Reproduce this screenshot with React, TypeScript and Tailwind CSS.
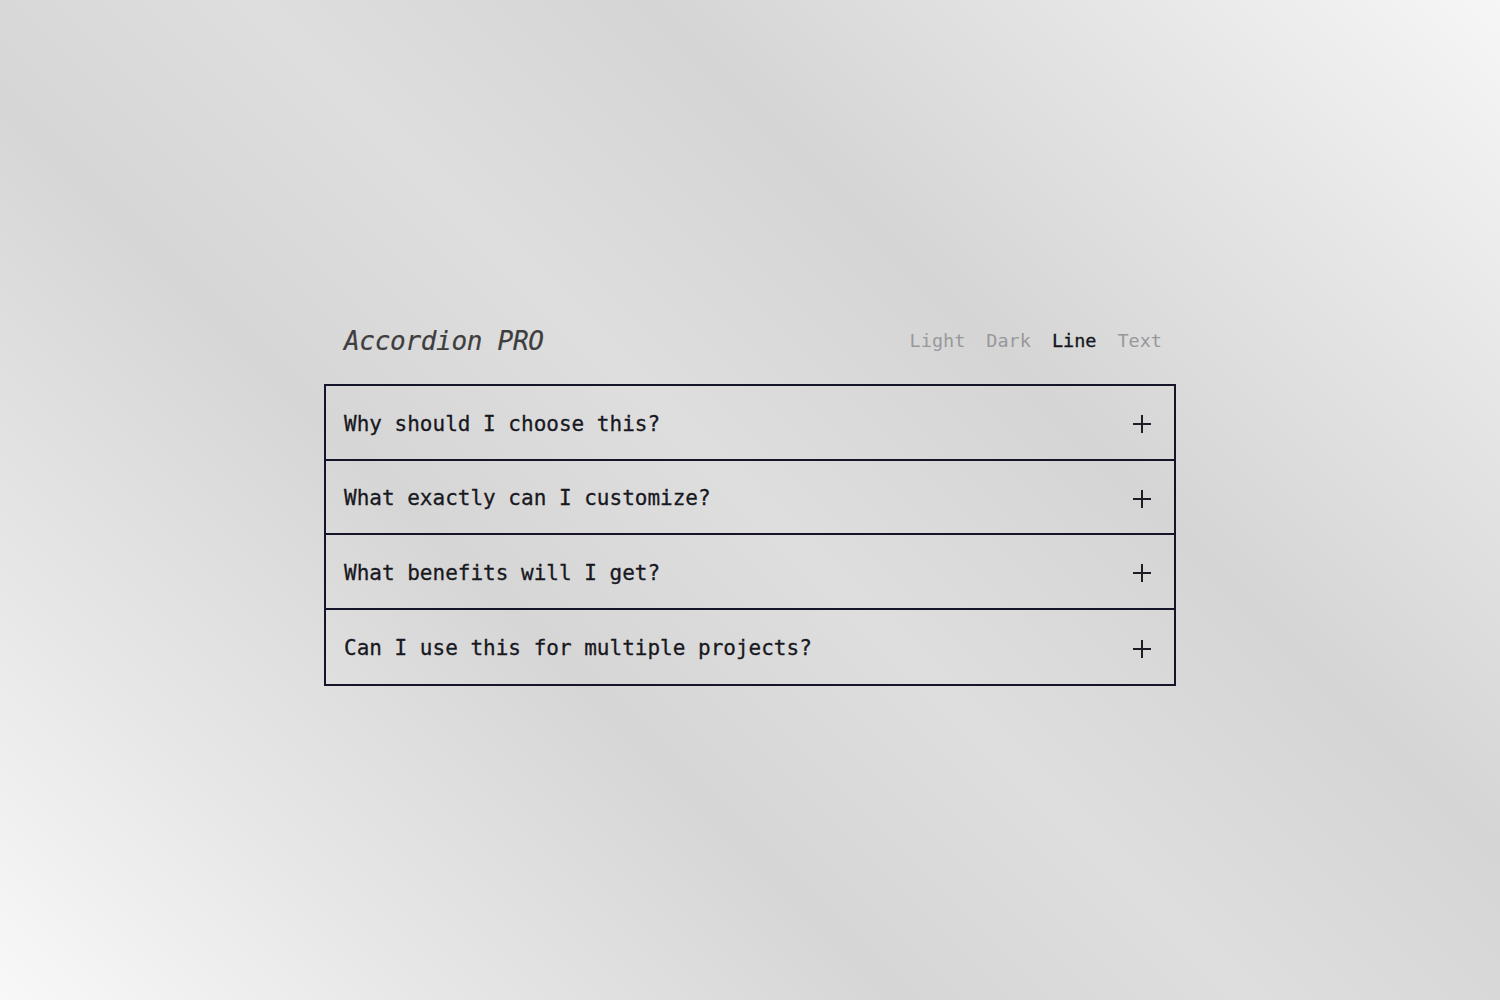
import React from 'react';

const questions = [
  'Why should I choose this?',
  'What exactly can I customize?',
  'What benefits will I get?',
  'Can I use this for multiple projects?',
];

const tabs = ['Light', 'Dark', 'Line', 'Text'];

const PlusIcon = () => (
  <svg width="20" height="20" viewBox="0 0 20 20" fill="none" stroke="#1d1d26" strokeWidth="2" strokeLinecap="butt">
    <path d="M1 10h18M10 1v18" />
  </svg>
);

const App = () => {
  return (
    <div className="min-h-screen w-full flex items-center justify-center bg-[linear-gradient(45deg,#f8f8f8_0%,#e6e6e6_18%,#d6d6d6_36%,#dedede_50%,#d5d5d5_66%,#e4e4e4_82%,#f6f6f6_100%)] font-['DejaVu_Sans_Mono','Liberation_Mono',monospace]">
      <div className="w-[852px] flex flex-col">
        <div className="h-[50px] mb-[20px] pt-[4px] flex items-center justify-between pl-[20px] pr-[14px]">
          <h1 className="text-[26px] italic text-[#3e3e3e] tracking-[-0.3px] [-webkit-text-stroke:0.2px_#3e3e3e]">Accordion PRO</h1>
          <nav className="flex items-center gap-[21px] text-[18.5px]">
            {tabs.map((t) => (
              <span key={t} className={t === 'Line' ? 'text-[#15151c] [-webkit-text-stroke:0.3px_#15151c]' : 'text-[#98989c]'}>
                {t}
              </span>
            ))}
          </nav>
        </div>
        <div className="border-2 border-[#15152a] divide-y-2 divide-[#15152a]">
          {questions.map((q) => (
            <div key={q} className="h-[74.5px] pt-[4px] flex items-center justify-between pl-[18px] pr-[22px]">
              <span className="text-[21px] text-[#18181f] [-webkit-text-stroke:0.3px_#18181f]">{q}</span>
              <PlusIcon />
            </div>
          ))}
        </div>
      </div>
    </div>
  );
};

export default App;
